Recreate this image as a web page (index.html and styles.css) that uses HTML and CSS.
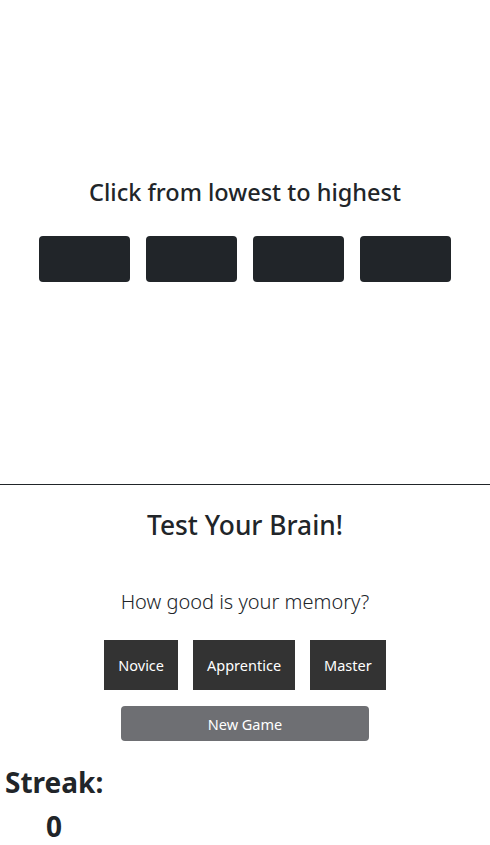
FILE: index.html
```html
<!DOCTYPE html>
<html>
<head>
<meta charset="utf-8">
<link rel="stylesheet" href="styles.css">
</head>
<body>
<main class="app">
  <section class="board">
    <h4 class="prompt">Click from lowest to highest</h4>
    <div class="cards">
      <div class="card"></div>
      <div class="card"></div>
      <div class="card"></div>
      <div class="card"></div>
    </div>
  </section>
  <section class="panel">
    <h3 class="title">Test Your Brain!</h3>
    <p class="lead">How good is your memory?</p>
    <div class="levels">
      <button class="level">Novice</button>
      <button class="level">Apprentice</button>
      <button class="level">Master</button>
    </div>
    <button class="new-game">New Game</button>
    <div class="streak">
      <div class="streak-label">Streak:</div>
      <div class="streak-value">0</div>
    </div>
  </section>
</main>
</body>
</html>
```
FILE: styles.css
```css
* { box-sizing: border-box; }
body {
  margin: 0;
  font-family: "Noto Sans", "Open Sans", sans-serif;
  color: #212529;
  background: #fff;
}
.board {
  height: 484px;
  display: flex;
  flex-direction: column;
  align-items: center;
  padding-top: 176px;
}
.prompt {
  margin: 0;
  font-size: 23.5px;
  font-weight: 500;
  line-height: 32px;
}
.cards {
  display: flex;
  gap: 15.5px;
  margin-top: 28px;
}
.card {
  width: 91.5px;
  height: 46px;
  background: #212529;
  border-radius: 4px;
}
.panel {
  border-top: 1px solid #212529;
  display: flex;
  flex-direction: column;
  align-items: center;
}
.title {
  margin: 22px 0 0;
  font-size: 26.3px;
  font-weight: 500;
  line-height: 36px;
}
.lead {
  margin: 44px 0 0;
  font-size: 20px;
  font-weight: 300;
  line-height: 30px;
}
.levels {
  display: flex;
  gap: 15px;
  margin-top: 23px;
}
.level {
  height: 50px;
  border: 0;
  border-radius: 0;
  background: #333333;
  color: #fff;
  font-family: inherit;
  font-size: 14.5px;
  padding: 0 14px;
}
.new-game {
  margin-top: 16px;
  width: 248px;
  height: 35px;
  border: 0;
  border-radius: 4px;
  background: #6e6f73;
  color: #fff;
  font-family: inherit;
  font-size: 14.5px;
}
.streak {
  align-self: flex-start;
  margin: 19px 0 0 5px;
  display: flex;
  flex-direction: column;
  align-items: center;
  font-weight: 700;
  font-size: 28px;
  line-height: 44px;
}
```
